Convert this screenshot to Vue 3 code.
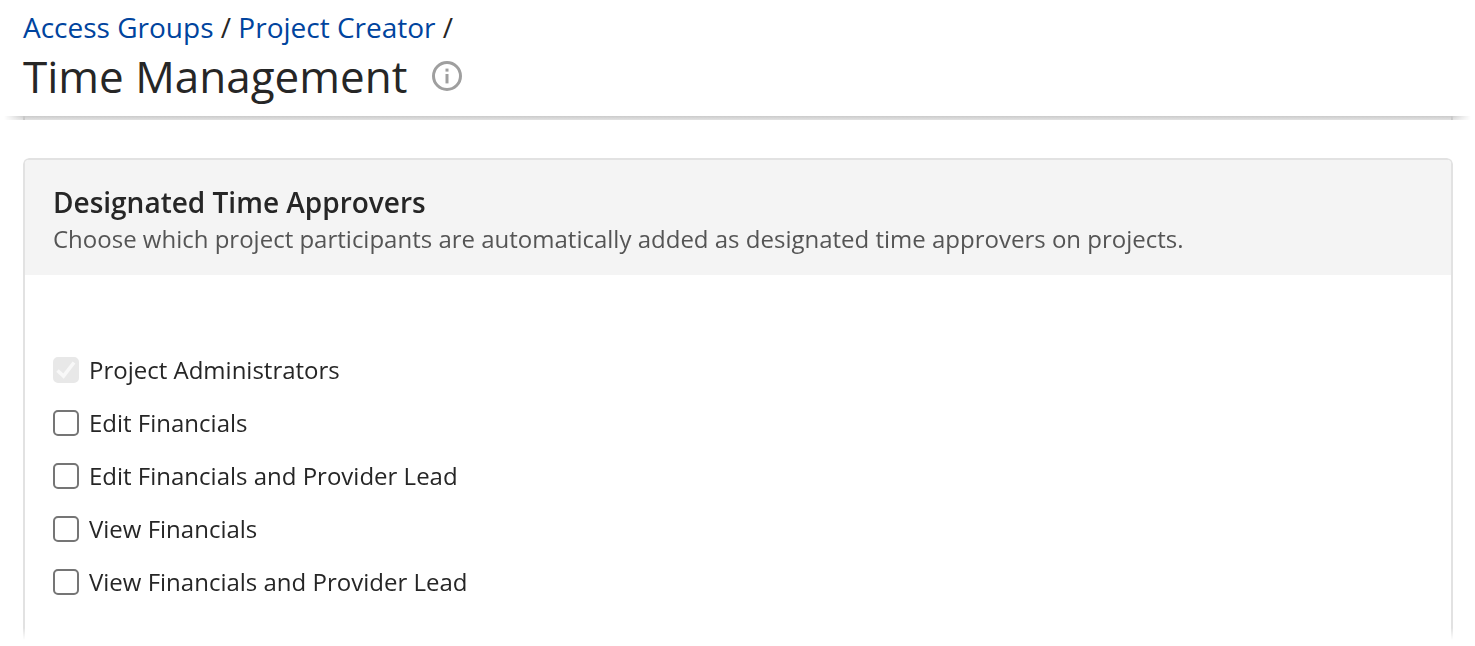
<template>
  <div class="page">
    <header class="page-header">
      <nav class="breadcrumbs" aria-label="Breadcrumb">
        <a href="#access-groups">Access Groups</a> / <a href="#project-creator">Project Creator</a> /
      </nav>
      <div class="title-row">
        <h1>Time Management</h1>
        <button type="button" class="info-btn" aria-label="More information">
          <svg viewBox="0 0 30 30" width="30" height="30" aria-hidden="true">
            <circle cx="15" cy="15" r="13.5" fill="none" stroke="#9f9f9f" stroke-width="3" />
            <rect x="13.5" y="7.6" width="3" height="3" fill="#9f9f9f" />
            <rect x="13.5" y="13" width="3" height="9.4" fill="#9f9f9f" />
          </svg>
        </button>
      </div>
    </header>
    <div class="header-shadow"><span></span></div>

    <main>
      <section class="card">
        <div class="card-header">
          <h2>Designated Time Approvers</h2>
          <p>Choose which project participants are automatically added as designated time approvers on projects.</p>
        </div>
        <ul class="options">
          <li v-for="option in options" :key="option.id">
            <span class="box">
              <input
                :id="option.id"
                v-model="option.checked"
                type="checkbox"
                :disabled="option.disabled"
              />
              <svg v-if="option.checked" viewBox="0 0 26 26" aria-hidden="true">
                <path d="M4.5 13.5 L10.5 19 L21 5.5" fill="none" stroke="currentColor" stroke-width="3.6" />
              </svg>
            </span>
            <label :for="option.id">{{ option.label }}</label>
          </li>
        </ul>
      </section>
    </main>
  </div>
</template>

<script setup>
import { ref } from 'vue';

const options = ref([
  { id: 'project-administrators', label: 'Project Administrators', checked: true, disabled: true },
  { id: 'edit-financials', label: 'Edit Financials', checked: false, disabled: false },
  { id: 'edit-financials-lead', label: 'Edit Financials and Provider Lead', checked: false, disabled: false },
  { id: 'view-financials', label: 'View Financials', checked: false, disabled: false },
  { id: 'view-financials-lead', label: 'View Financials and Provider Lead', checked: false, disabled: false }
]);
</script>

<style>
body {
  margin: 0;
  background: #fff;
}
</style>

<style scoped>
.page {
  font-family: "Open Sans", "Noto Sans", sans-serif;
  color: #262626;
}

.page-header {
  padding: 7px 23px 11px;
}

.breadcrumbs {
  font-size: 28px;
  line-height: 40px;
}

.breadcrumbs a {
  color: #00449e;
  text-decoration: none;
}

.breadcrumbs a:hover {
  text-decoration: underline;
}

.title-row {
  display: flex;
  align-items: center;
  gap: 25px;
}

h1 {
  margin: 0;
  font-size: 44px;
  font-weight: 400;
  line-height: 58px;
}

.info-btn {
  display: flex;
  margin: 0;
  padding: 0;
  border: none;
  background: none;
  cursor: pointer;
}

/* sliver of the scrolled content under the sticky header */
.header-shadow {
  height: 4px;
  padding: 0 22px 0 23px;
  background: linear-gradient(#cbcbcb, #e2e2e2);
  mask-image: linear-gradient(to right, transparent 4px, #000 24px, #000 calc(100% - 24px), transparent calc(100% - 4px));
}

.header-shadow span {
  display: block;
  height: 4px;
  border: solid #c8c8c8;
  border-width: 0 2px;
}

main {
  padding: 38px 22px 6px 23px;
}

.card {
  border: 2px solid #e2e2e2;
  border-bottom: none;
  border-radius: 6px 6px 0 0;
  mask-image: linear-gradient(to top, transparent, #000 12px);
}

.card-header {
  padding: 23px 28px 18px;
  border-radius: 4px 4px 0 0;
  background: #f4f4f4;
}

h2 {
  margin: 0;
  font-size: 28px;
  font-weight: 600;
  line-height: 38px;
}

.card-header p {
  margin: 0;
  color: #555;
  font-size: 24px;
  line-height: 36px;
}

.options {
  display: flex;
  flex-direction: column;
  gap: 19px;
  margin: 0;
  padding: 78px 28px 41px;
  list-style: none;
}

.options li {
  display: flex;
  align-items: center;
  gap: 10px;
}

.options label {
  font-size: 24px;
  line-height: 34px;
}

.box {
  position: relative;
  width: 26px;
  height: 26px;
}

.box input {
  display: block;
  box-sizing: border-box;
  width: 26px;
  height: 26px;
  margin: 0;
  border: 2px solid #757575;
  border-radius: 5px;
  background: #fff;
  appearance: none;
}

.box input:checked {
  border-color: #00449e;
  background: #00449e;
}

.box input:disabled {
  border-color: #e8e8e8;
  background: #e8e8e8;
}

.box svg {
  position: absolute;
  inset: 0;
  color: #f8f8f8;
  pointer-events: none;
}
</style>
